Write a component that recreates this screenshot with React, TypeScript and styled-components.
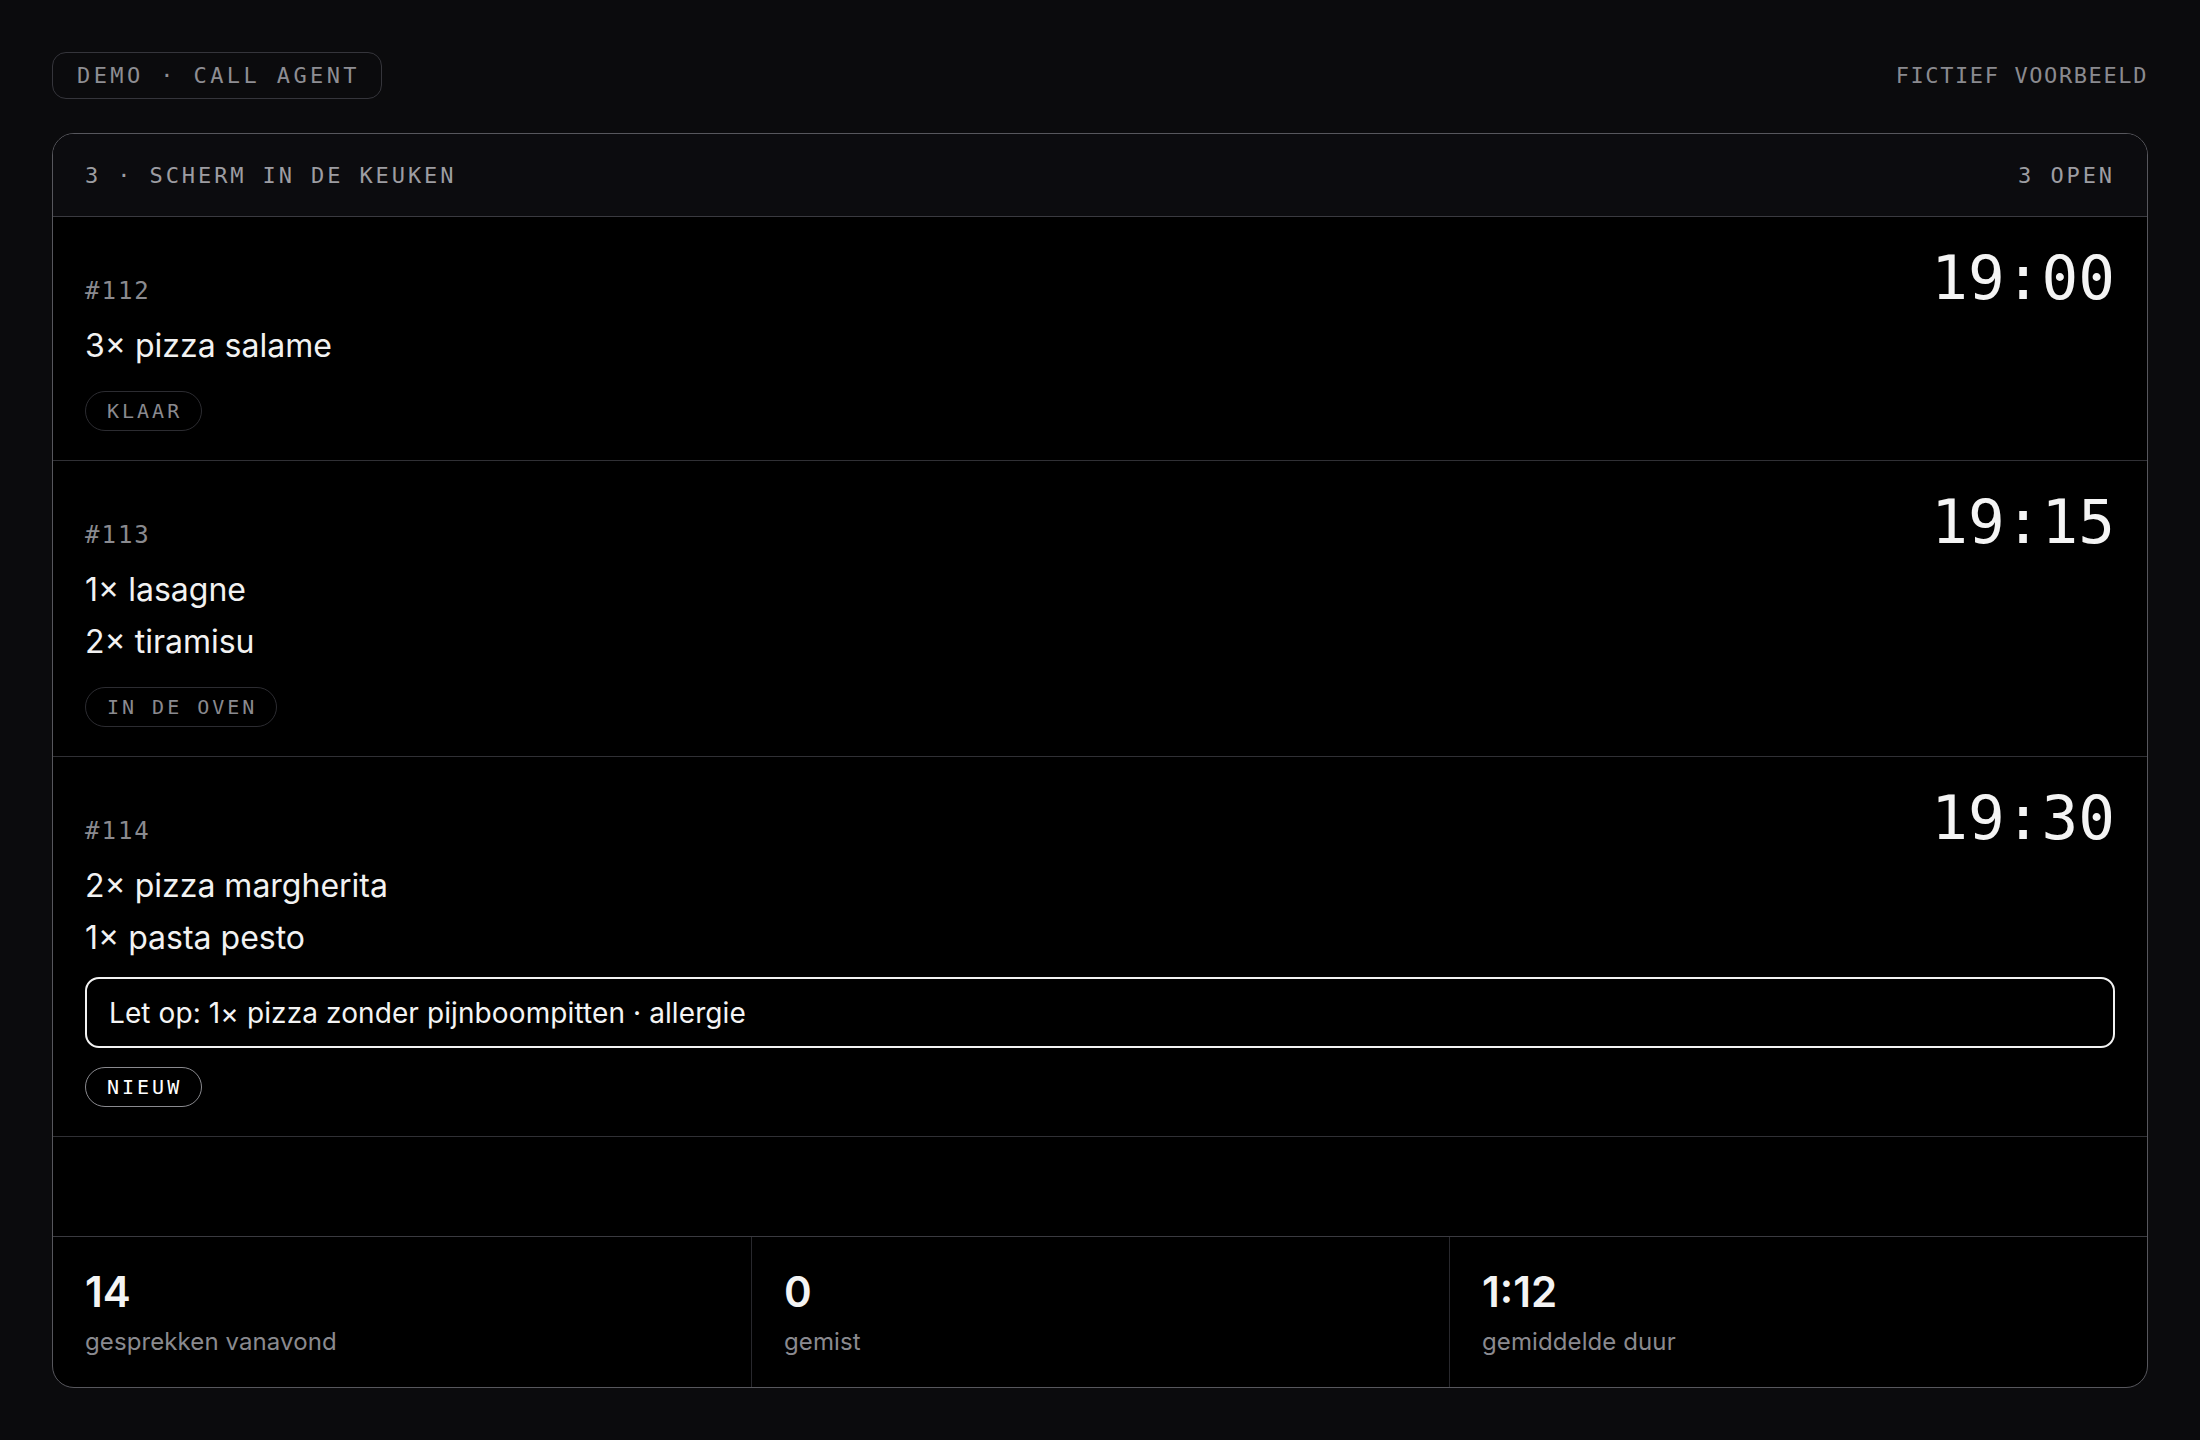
import React from 'react';
import styled, { createGlobalStyle } from 'styled-components';

const mono = `'DejaVu Sans Mono', 'Liberation Mono', monospace`;
const sans = `Inter, 'Noto Sans', 'Liberation Sans', sans-serif`;

const GlobalStyle = createGlobalStyle`
  * {
    box-sizing: border-box;
  }
  html,
  body {
    margin: 0;
    padding: 0;
    background: #0b0b0d;
  }
  body {
    font-family: ${sans};
    color: #f2f2f2;
  }
`;

const Page = styled.div`
  height: 100vh;
  padding: 52px;
  display: flex;
  flex-direction: column;
  gap: 34px;
`;

const TopBar = styled.div`
  display: flex;
  align-items: center;
  justify-content: space-between;
`;

const DemoBadge = styled.div`
  height: 47px;
  display: flex;
  align-items: center;
  padding: 0 21px 0 24px;
  border: 1px solid #35353b;
  border-radius: 14px;
  font-family: ${mono};
  font-size: 22px;
  letter-spacing: 3.4px;
  color: #8e8e93;
`;

const Disclaimer = styled.div`
  font-family: ${mono};
  font-size: 22px;
  letter-spacing: 1.6px;
  color: #8a8a8f;
`;

const Board = styled.section`
  flex: 1;
  display: flex;
  flex-direction: column;
  border: 1px solid #57575d;
  border-radius: 22px;
  overflow: hidden;
  background: #000;
`;

const BoardHeader = styled.header`
  height: 83px;
  flex-shrink: 0;
  display: flex;
  align-items: center;
  justify-content: space-between;
  padding: 0 32px;
  background: #0c0c0f;
  border-bottom: 1px solid #3a3a40;
  font-family: ${mono};
  font-size: 22px;
  letter-spacing: 2.9px;
  color: #9d9da2;
`;

const OrderList = styled.div`
  flex: 1;
  display: flex;
  flex-direction: column;
`;

const OrderRow = styled.article`
  padding: 30px 32px 29px;
  border-bottom: 1px solid #303035;
`;

const OrderHead = styled.div`
  display: flex;
  align-items: baseline;
  justify-content: space-between;
`;

const OrderId = styled.span`
  font-family: ${mono};
  font-size: 24px;
  letter-spacing: 2px;
  color: #8a8a8f;
`;

const PickupTime = styled.span`
  font-family: ${mono};
  font-size: 61px;
  line-height: 1;
  color: #f4f4f4;
`;

const Items = styled.ul`
  list-style: none;
  margin: 12px 0 0;
  padding: 0;
`;

const Item = styled.li`
  font-size: 32px;
  line-height: 52px;
  color: #f2f2f2;
`;

const AllergyNote = styled.div`
  margin-top: 13px;
  height: 71px;
  display: flex;
  align-items: center;
  padding: 0 22px;
  border: 2px solid #f2f2f2;
  border-radius: 14px;
  font-size: 28px;
  letter-spacing: 0.1px;
  color: #f4f4f4;
`;

const StatusPill = styled.div<{ $fresh?: boolean }>`
  margin-top: 19px;
  display: inline-flex;
  align-items: center;
  height: 40px;
  padding: 0 19px 0 21px;
  border-radius: 20px;
  border: 1px solid ${(p) => (p.$fresh ? '#8a8a8f' : '#2c2c31')};
  font-family: ${mono};
  font-size: 20px;
  letter-spacing: 3px;
  color: ${(p) => (p.$fresh ? '#ffffff' : '#8a8a8f')};
`;

const Stats = styled.footer`
  display: grid;
  grid-template-columns: repeat(3, 1fr);
  border-top: 1px solid #3a3a40;
  flex-shrink: 0;
`;

const Stat = styled.div`
  padding: 30px 32px 28px;
  & + & {
    border-left: 1px solid #28282d;
  }
`;

const StatValue = styled.div`
  font-size: 42px;
  font-weight: 600;
  line-height: 1.2;
  color: #f4f4f4;
`;

const StatLabel = styled.div`
  margin-top: 8px;
  font-size: 24px;
  line-height: 1.4;
  letter-spacing: 0.1px;
  color: #8a8a8f;
`;

type Order = {
  id: string;
  time: string;
  items: string[];
  note?: string;
  status: string;
  fresh?: boolean;
};

const orders: Order[] = [
  { id: '#112', time: '19:00', items: ['3× pizza salame'], status: 'KLAAR' },
  {
    id: '#113',
    time: '19:15',
    items: ['1× lasagne', '2× tiramisu'],
    status: 'IN DE OVEN',
  },
  {
    id: '#114',
    time: '19:30',
    items: ['2× pizza margherita', '1× pasta pesto'],
    note: 'Let op: 1× pizza zonder pijnboompitten · allergie',
    status: 'NIEUW',
    fresh: true,
  },
];

const stats = [
  { value: '14', label: 'gesprekken vanavond' },
  { value: '0', label: 'gemist' },
  { value: '1:12', label: 'gemiddelde duur' },
];

const App: React.FC = () => (
  <>
    <GlobalStyle />
    <Page>
      <TopBar>
        <DemoBadge>DEMO · CALL AGENT</DemoBadge>
        <Disclaimer>FICTIEF VOORBEELD</Disclaimer>
      </TopBar>
      <Board>
        <BoardHeader>
          <span>3 · SCHERM IN DE KEUKEN</span>
          <span>{orders.length} OPEN</span>
        </BoardHeader>
        <OrderList>
          {orders.map((order) => (
            <OrderRow key={order.id}>
              <OrderHead>
                <OrderId>{order.id}</OrderId>
                <PickupTime>{order.time}</PickupTime>
              </OrderHead>
              <Items>
                {order.items.map((item) => (
                  <Item key={item}>{item}</Item>
                ))}
              </Items>
              {order.note && <AllergyNote>{order.note}</AllergyNote>}
              <StatusPill $fresh={order.fresh}>{order.status}</StatusPill>
            </OrderRow>
          ))}
        </OrderList>
        <Stats>
          {stats.map((stat) => (
            <Stat key={stat.label}>
              <StatValue>{stat.value}</StatValue>
              <StatLabel>{stat.label}</StatLabel>
            </Stat>
          ))}
        </Stats>
      </Board>
    </Page>
  </>
);

export default App;
